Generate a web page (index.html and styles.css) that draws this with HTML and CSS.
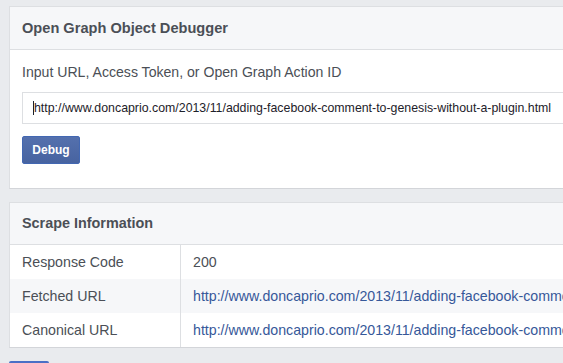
FILE: index.html
```html
<!DOCTYPE html>
<html>
<head>
<meta charset="utf-8">
<link rel="stylesheet" href="styles.css">
</head>
<body>
<div class="page">
  <section class="card card-debug">
    <div class="card-head">Open Graph Object Debugger</div>
    <div class="card-body">
      <div class="label">Input URL, Access Token, or Open Graph Action ID</div>
      <div class="field"><span class="caret"></span>http://www.doncaprio.com/2013/11/adding-facebook-comment-to-genesis-without-a-plugin.html</div>
      <button class="btn">Debug</button>
    </div>
  </section>
  <section class="card card-scrape">
    <div class="card-head head-scrape">Scrape Information</div>
    <div class="table">
      <div class="row">
        <div class="cell key">Response Code</div>
        <div class="cell val">200</div>
      </div>
      <div class="row alt">
        <div class="cell key">Fetched URL</div>
        <div class="cell val"><a class="link">http://www.doncaprio.com/2013/11/adding-facebook-comment-to-genesis-without-a-plugin.html</a></div>
      </div>
      <div class="row">
        <div class="cell key">Canonical URL</div>
        <div class="cell val"><a class="link">http://www.doncaprio.com/2013/11/adding-facebook-comment-to-genesis-without-a-plugin.html</a></div>
      </div>
    </div>
  </section>
  <div class="next-btn"></div>
</div>
</body>
</html>
```

FILE: styles.css
```css
html, body {
  margin: 0;
  padding: 0;
  background: #e9ebee;
  overflow: hidden;
  height: 363px;
}
.page {
  padding: 6px 0 0 9px;
  width: 640px;
  font-family: "Liberation Sans", Arial, sans-serif;
}
.card {
  background: #fff;
  border: 1px solid #dddfe2;
  border-bottom-color: #d3d5d9;
}
.card-head {
  height: 42px;
  line-height: 42px;
  background: #f6f7f9;
  border-bottom: 1px solid #dddfe2;
  padding-left: 12px;
  font-size: 14.6px;
  font-weight: bold;
  color: #4b4f56;
}
.card-body {
  padding: 12px 12px 24px;
}
.label {
  font-size: 14.1px;
  line-height: 20px;
  color: #4b4f56;
  margin-bottom: 10px;
}
.field {
  height: 30px;
  line-height: 30px;
  border: 1px solid #dddfe2;
  padding-left: 10px;
  font-size: 12.35px;
  color: #1d2129;
  white-space: nowrap;
  overflow: hidden;
}
.caret {
  display: inline-block;
  width: 1px;
  height: 14px;
  background: #1d2129;
  vertical-align: -3px;
}
.btn {
  display: block;
  margin-top: 12px;
  width: 58px;
  height: 28px;
  padding: 0;
  border: 1px solid #4267b2;
  border-radius: 2px;
  background: linear-gradient(#5470ad, #4763a0);
  color: #fff;
  font-family: "Liberation Sans", Arial, sans-serif;
  font-size: 12px;
  font-weight: bold;
}
.card-scrape {
  margin-top: 13px;
}
.head-scrape {
  height: 41px;
  line-height: 41px;
  font-size: 14.4px;
}
.row {
  display: flex;
  height: 34px;
  align-items: stretch;
}
.row.alt {
  background: #f6f7f9;
}
.cell {
  font-size: 14.2px;
  line-height: 34px;
  white-space: nowrap;
  overflow: hidden;
}
.key {
  width: 158px;
  padding-left: 12px;
  border-right: 1px solid #dddfe2;
  color: #4b4f56;
}
.val {
  flex: 1;
  padding-left: 12px;
  color: #4b4f56;
}
.link {
  color: #365899;
  text-decoration: none;
}
.next-btn {
  margin-top: 13px;
  width: 40px;
  height: 20px;
  background: #4a6fc6;
  border-radius: 2px 2px 0 0;
}
```
